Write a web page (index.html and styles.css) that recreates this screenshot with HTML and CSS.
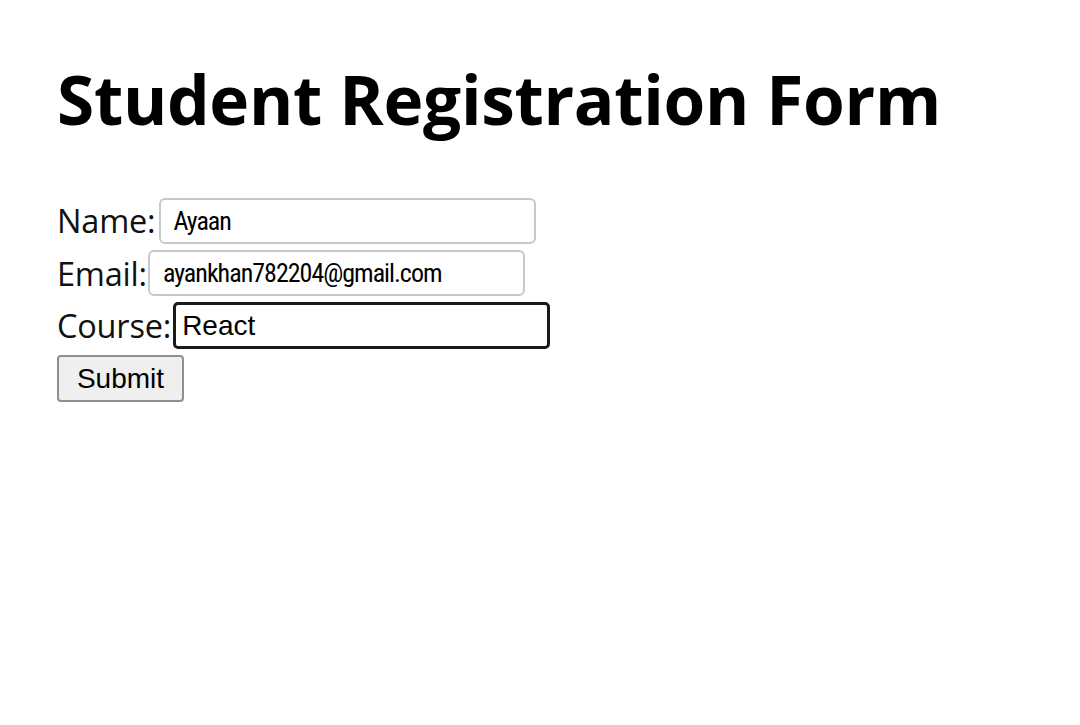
FILE: index.html
```html
<!DOCTYPE html>
<html>
<head>
<meta charset="utf-8">
<link rel="stylesheet" href="styles.css">
</head>
<body>
<div class="page">
  <h1 class="title">Student Registration Form</h1>
  <form class="form">
    <div class="row">
      <label class="label">Name:</label>
      <input class="field field-name narrow" type="text" value="Ayaan">
    </div>
    <div class="row">
      <label class="label">Email:</label>
      <input class="field field-email narrow" type="text" value="ayankhan782204@gmail.com">
    </div>
    <div class="row">
      <label class="label">Course:</label>
      <input class="field field-course" type="text" value="React">
    </div>
    <div class="row">
      <button class="submit" type="button">Submit</button>
    </div>
  </form>
</div>
</body>
</html>
```
FILE: styles.css
```css
html, body {
  margin: 0;
  padding: 0;
  background: #ffffff;
}
.page {
  padding: 59px 0 0 57px;
  font-family: "Open Sans", "Noto Sans", sans-serif;
  color: #000;
}
.title {
  margin: 0 0 58px 0;
  font-family: "Open Sans", "Noto Sans", sans-serif;
  font-weight: 700;
  font-size: 67.5px;
  line-height: 80px;
  letter-spacing: -0.3px;
}
.form {
  display: flex;
  flex-direction: column;
  gap: 5.7px;
}
.row {
  display: flex;
  align-items: center;
  height: 47px;
}
.label {
  font-size: 32.5px;
  line-height: 47px;
  color: #111;
  letter-spacing: -0.2px;
}
.field {
  box-sizing: border-box;
  height: 46px;
  width: 377px;
  background: #fff;
  color: #000;
  outline: none;
}
.narrow {
  font-family: "Roboto Condensed", "Liberation Sans Narrow", sans-serif;
  font-size: 26px;
  letter-spacing: -1px;
  border: 2px solid #c8c8c8;
  border-radius: 6px;
  padding: 0 12px;
}
.field-name { margin-left: 4px; }
.field-email { margin-left: 1px; padding-left: 13px; }
.field-course {
  font-family: "Liberation Sans", Arial, sans-serif;
  font-size: 28px;
  border: 3px solid #1a1a1a;
  border-radius: 5px;
  padding: 0 6px;
  height: 47px;
  margin-left: 2px;
}
.submit {
  box-sizing: border-box;
  width: 127px;
  height: 47px;
  font-family: "Liberation Sans", Arial, sans-serif;
  font-size: 28px;
  color: #000;
  background: #efefef;
  border: 2px solid #8f8f8f;
  border-radius: 4px;
  padding: 0;
}
```
